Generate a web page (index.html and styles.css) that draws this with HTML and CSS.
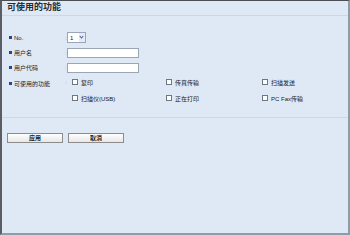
FILE: index.html
```html
<!DOCTYPE html>
<html>
<head>
    <title>可使用的功能</title>
<link rel="stylesheet" href="styles.css">
</head>
<body>

    <div class="panel">
        <div class="panel-title">可使用的功能</div>

        <div class="form">
            <div class="row">
                <div class="label"><span class="marker"></span>No.</div>
                <div class="colon">:</div>
                <div class="select">1<span class="chevron"></span></div>
            </div>
            <div class="row">
                <div class="label"><span class="marker"></span>用户名</div>
                <div class="colon">:</div>
                <div class="text-box"></div>
            </div>
            <div class="row">
                <div class="label"><span class="marker"></span>用户代码</div>
                <div class="colon">:</div>
                <div class="text-box"></div>
            </div>
            <div class="row row-top">
                <div class="label"><span class="marker"></span>可使用的功能</div>
                <div class="colon">:</div>
                <div class="func-grid">
                    <div class="check"><span class="box"></span>复印</div>
                    <div class="check"><span class="box"></span>传真传输</div>
                    <div class="check"><span class="box"></span>扫描发送</div>
                    <div class="check"><span class="box"></span>扫描仪(USB)</div>
                    <div class="check"><span class="box"></span>正在打印</div>
                    <div class="check"><span class="box"></span>PC Fax传输</div>
                </div>
            </div>
        </div>

        <div class="divider"></div>

        <div class="buttons">
            <div class="btn">应用</div>
            <div class="btn">取消</div>
        </div>
    </div>

</body>
</html>
```

FILE: styles.css
```css
/* General */
body {
    margin: 0;
    font-family: "Liberation Sans", "Noto Sans CJK SC", sans-serif;
    color: #222;
}

/* Panel */
.panel {
    width: 350px;
    height: 235px;
    box-sizing: border-box;
    background: #dee9f5;
    border-top: 1px solid #4a4d52;
    border-left: 2px solid #5a5e64;
    border-right: 2px solid #8e9ba8;
    border-bottom: 2px solid #8e9ba8;
}

.panel-title {
    height: 14px;
    padding-left: 5px;
    font-size: 9px;
    font-weight: bold;
    line-height: 13px;
    color: #2b2b2b;
    border-bottom: 1px solid #cbd8e7;
}

/* Form rows */
.form {
    padding: 14px 0 0 7px;
}

.row {
    display: flex;
    align-items: center;
    height: 15px;
    font-size: 6px;
}

.row-top {
    align-items: flex-start;
    height: auto;
    padding-top: 4px;
}

.label {
    width: 56px;
    display: flex;
    align-items: center;
}

.marker {
    width: 3px;
    height: 3px;
    background: #26468a;
    margin-right: 2px;
}

.colon {
    width: 2px;
    color: #999;
}

.select {
    width: 15px;
    height: 9px;
    background: #fff;
    border: 1px solid #9aa6b3;
    display: flex;
    align-items: center;
    justify-content: space-between;
    padding-left: 2px;
    box-sizing: content-box;
    font-size: 6px;
}

.chevron {
    width: 6px;
    height: 9px;
    background: #e6ecf4;
    position: relative;
}

.chevron::after {
    content: "";
    position: absolute;
    left: 1px;
    top: 2px;
    width: 2px;
    height: 2px;
    border-right: 1px solid #3c64a8;
    border-bottom: 1px solid #3c64a8;
    transform: rotate(45deg);
}

.text-box {
    width: 70px;
    height: 8px;
    background: #fff;
    border: 1px solid #9aa6b3;
}

/* Function checkboxes */
.func-grid {
    display: grid;
    grid-template-columns: 94px 96px auto;
    row-gap: 10px;
    padding-left: 5px;
}

.check {
    display: flex;
    align-items: center;
    height: 6px;
}

.box {
    width: 4px;
    height: 4px;
    background: #fff;
    border: 1px solid #6d7884;
    margin-right: 3px;
}

/* Divider & buttons */
.divider {
    margin-top: 16px;
    border-top: 1px solid #cbd8e7;
}

.buttons {
    display: flex;
    gap: 5px;
    padding: 15px 0 0 5px;
}

.btn {
    width: 54px;
    height: 8px;
    background: linear-gradient(#ffffff, #e7e7e7);
    border: 1px solid #8c8c8c;
    font-size: 6px;
    font-weight: bold;
    line-height: 8px;
    text-align: center;
    color: #222;
}
```
